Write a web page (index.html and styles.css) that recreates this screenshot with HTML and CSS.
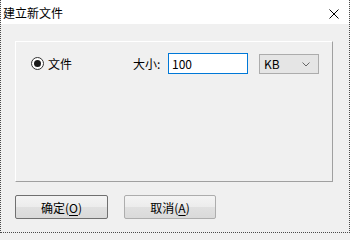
FILE: index.html
```html
<!DOCTYPE html>
<html lang="zh-CN">
<head>
<meta charset="utf-8">
<title>建立新文件</title>
<link rel="stylesheet" href="styles.css">
</head>
<body>
<div class="window">
  <div class="titlebar">
    <span class="title">建立新文件</span>
    <span class="close">
      <svg width="10" height="10" viewBox="0 0 10 10"><path d="M0.5 0.5 L9.5 9.5 M9.5 0.5 L0.5 9.5" stroke="#000" stroke-width="1" fill="none"/></svg>
    </span>
  </div>
  <div class="content">
    <div class="panel">
      <div class="row">
        <label class="radio-label">
          <span class="radio"><span class="dot"></span></span>
          <span>文件</span>
        </label>
        <span class="size-label">大小:</span>
        <div class="input">100</div>
        <div class="select">
          <span>KB</span>
          <svg class="chev" width="8" height="5" viewBox="0 0 8 5"><path d="M0.5 0.5 L4 4 L7.5 0.5" stroke="#666" stroke-width="1" fill="none"/></svg>
        </div>
      </div>
    </div>
    <div class="buttons">
      <button class="btn default">确定(<u>O</u>)</button>
      <button class="btn cancel">取消(<u>A</u>)</button>
    </div>
  </div>
</div>
</body>
</html>
```

FILE: styles.css
```css
html, body {
  margin: 0;
  padding: 0;
  background: #f0f0f0;
}
body {
  font-family: "Noto Sans CJK SC", "Noto Sans", sans-serif;
  font-size: 12px;
  color: #000;
}
.window {
  width: 350px;
  height: 233px;
  box-sizing: border-box;
  border-left: 1px dotted #4a4a4a;
  border-right: 1px dotted #4a4a4a;
  border-bottom: 1px dotted #4a4a4a;
  background: #f0f0f0;
  display: flex;
  flex-direction: column;
}
.titlebar {
  height: 24px;
  background: #fff;
  display: flex;
  align-items: center;
  justify-content: space-between;
  padding: 0 10px 0 2px;
}
.title {
  font-size: 12px;
  line-height: 24px;
  margin-top: 1px;
}
.close {
  display: flex;
  margin-top: 3px;
}
.content {
  padding: 17px 16px 0 14px;
}
.panel {
  height: 141px;
  box-sizing: border-box;
  border-top: 1px solid #fff;
  border-left: 1px solid #fff;
  border-right: 1px solid #a0a0a0;
  border-bottom: 1px solid #a0a0a0;
  padding: 11px 0 0 15px;
}
.row {
  display: flex;
  align-items: center;
  height: 21px;
}
.radio-label {
  display: flex;
  align-items: center;
  gap: 4px;
  width: 102px;
}
.radio {
  width: 13px;
  height: 13px;
  box-sizing: border-box;
  border: 1px solid #333;
  border-radius: 50%;
  background: #fff;
  display: flex;
  align-items: center;
  justify-content: center;
}
.dot {
  width: 7px;
  height: 7px;
  border-radius: 50%;
  background: #1a1a1a;
}
.size-label {
  width: 35px;
}
.input {
  width: 80px;
  height: 21px;
  box-sizing: border-box;
  border: 1px solid #0078d7;
  background: #fff;
  padding-left: 3px;
  line-height: 19px;
}
.select {
  margin-left: 11px;
  width: 60px;
  height: 20px;
  box-sizing: border-box;
  border: 1px solid #acacac;
  background: #e5e5e5;
  display: flex;
  align-items: center;
  justify-content: space-between;
  padding: 0 8px 0 4px;
}
.chev {
  margin-top: 1px;
}
.buttons {
  display: flex;
  gap: 16px;
  margin-top: 13px;
}
.btn {
  font-family: "Noto Sans CJK SC", "Noto Sans", sans-serif;
  font-size: 12px;
  color: #000;
  height: 24px;
  box-sizing: border-box;
  background: linear-gradient(#f4f4f4, #ececec 50%, #e0e0e0 51%, #dadada);
  padding: 0;
  border-radius: 2px;
}
.btn u {
  text-underline-offset: 2px;
}
.default {
  width: 93px;
  border: 1px solid #707070;
}
.cancel {
  width: 92px;
  border: 1px solid #adadad;
}
```
